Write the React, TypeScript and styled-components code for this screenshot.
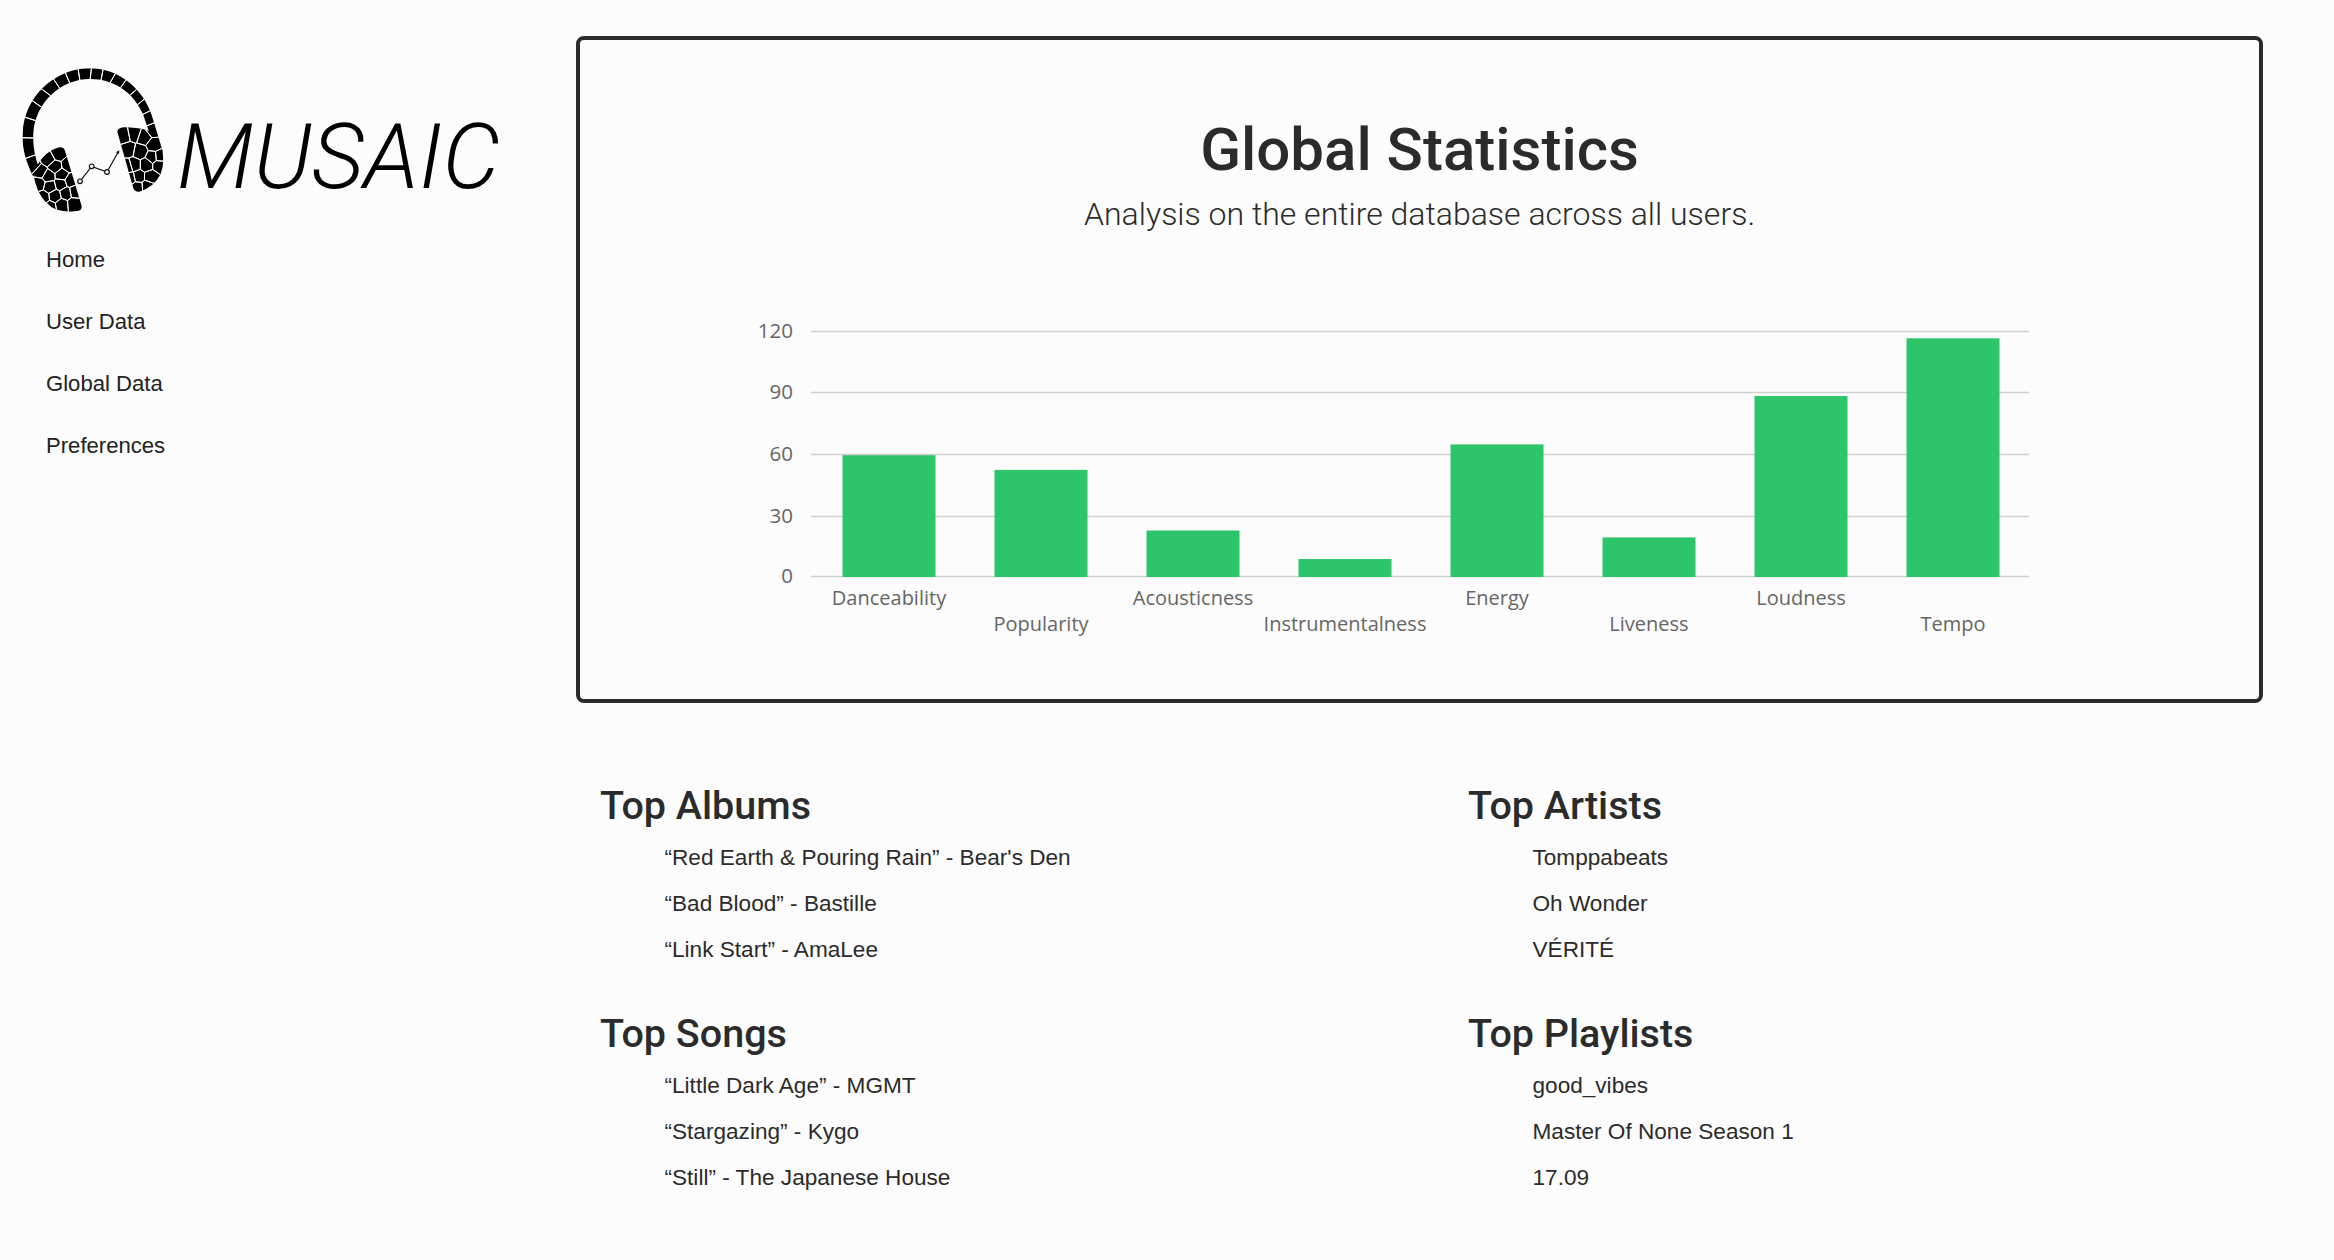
import React from 'react';
import styled, { createGlobalStyle } from 'styled-components';

interface Stat {
  name: string;
  value: number;
}

interface ListGroup {
  title: string;
  items: string[];
}

const navItems = ['Home', 'User Data', 'Global Data', 'Preferences'];

const stats: Stat[] = [
  { name: 'Danceability', value: 59.7 },
  { name: 'Popularity', value: 52.5 },
  { name: 'Acousticness', value: 22.8 },
  { name: 'Instrumentalness', value: 8.8 },
  { name: 'Energy', value: 65 },
  { name: 'Liveness', value: 19.4 },
  { name: 'Loudness', value: 88.7 },
  { name: 'Tempo', value: 117 },
];

const ticks = [
  { label: 0, y: 256.5 },
  { label: 30, y: 196.5 },
  { label: 60, y: 134.5 },
  { label: 90, y: 72.5 },
  { label: 120, y: 11.5 },
];

const groups: ListGroup[] = [
  { title: 'Top Albums', items: ['“Red Earth & Pouring Rain” - Bear\'s Den', '“Bad Blood” - Bastille', '“Link Start” - AmaLee'] },
  { title: 'Top Artists', items: ['Tomppabeats', 'Oh Wonder', 'VÉRITÉ'] },
  { title: 'Top Songs', items: ['“Little Dark Age” - MGMT', '“Stargazing” - Kygo', '“Still” - The Japanese House'] },
  { title: 'Top Playlists', items: ['good_vibes', 'Master Of None Season 1', '17.09'] },
];

// mosaic cells of the logo, placed by eye on the reference
const seeds: [number, number][] = [
  [82, 295], [84, 232], [100, 345], [100, 182], [126, 145], [152, 110], [185, 88], [218, 74], [255, 68], [290, 72],
  [322, 78], [352, 95], [382, 116], [408, 146], [430, 172], [446, 205], [460, 240],
  [175, 312], [145, 328], [165, 350], [122, 365], [145, 378], [185, 375], [205, 345], [116, 402], [150, 410], [182, 402],
  [212, 392], [130, 442], [165, 438], [198, 430], [225, 425], [150, 472], [185, 465], [222, 462],
  [372, 258], [402, 252], [432, 262], [462, 285], [385, 298], [420, 305], [458, 322], [402, 345], [440, 345],
  [476, 345], [385, 350], [415, 380], [452, 380], [412, 412], [442, 410], [392, 385], [478, 320],
];

function voronoiCracks(points: [number, number][]): string {
  return points
    .map(([x, y], i) => {
      let cell: [number, number][] = [[0, 0], [540, 0], [540, 540], [0, 540]];
      points.forEach(([ox, oy], j) => {
        if (i === j) return;
        const mx = (x + ox) / 2;
        const my = (y + oy) / 2;
        const dx = ox - x;
        const dy = oy - y;
        const side = (p: [number, number]) => (p[0] - mx) * dx + (p[1] - my) * dy;
        const next: [number, number][] = [];
        cell.forEach((p, k) => {
          const q = cell[(k + 1) % cell.length];
          const sp = side(p);
          const sq = side(q);
          if (sp <= 0) next.push(p);
          if (sp < 0 !== sq < 0) {
            const t = sp / (sp - sq);
            next.push([p[0] + (q[0] - p[0]) * t, p[1] + (q[1] - p[1]) * t]);
          }
        });
        cell = next;
      });
      return 'M' + cell.map((p) => `${p[0].toFixed(1)} ${p[1].toFixed(1)}`).join('L') + 'Z';
    })
    .join('');
}

const LOGO_SHAPE =
  'M100 380C75 330 66 290 68 250C72 140 165 55 270 55C360 55 430 120 455 195L490 310L445 240L430 195C400 125 340 87 270 87C180 87 105 160 100 250C98 285 105 320 114 345Z' +
  'M172 293Q190 288 195 302L245 468Q246 482 232 483Q190 490 155 472Q118 445 105 395Q98 370 112 345Q135 305 172 293Z' +
  'M352 245Q352 234 372 232Q410 232 440 240Q470 252 485 295Q496 335 482 372Q462 412 418 425Q404 426 400 415Z';

function Logo() {
  return (
    <LogoMark viewBox="0 0 540 534">
      <defs>
        <clipPath id="headphones">
          <path d={LOGO_SHAPE} />
        </clipPath>
      </defs>
      <g clipPath="url(#headphones)">
        <rect width="540" height="540" fill="#000" />
        <path d={voronoiCracks(seeds)} fill="none" stroke="#fff" strokeWidth="3" />
      </g>
      <path d="M240 394L275 349L321 366L355 305" fill="none" stroke="#111" strokeWidth="3.5" />
      <path d="M358 301L348 307L357 313Z" fill="#111" />
      <circle cx="240" cy="394" r="7" fill="#fcfcfc" stroke="#111" strokeWidth="3.5" />
      <circle cx="275" cy="349" r="7" fill="#fcfcfc" stroke="#111" strokeWidth="3.5" />
      <circle cx="321" cy="366" r="7" fill="#fcfcfc" stroke="#111" strokeWidth="3.5" />
    </LogoMark>
  );
}

const CHART_LEFT = 231;
const CHART_RIGHT = 1449;
const CHART_BASE = 257;
const UNIT = 2.04;
const BAR_WIDTH = 93;
const BAR_START = 262.5;
const BAR_STEP = 152;

function BarChart() {
  return (
    <ChartSvg viewBox="0 -14 1679 334">
      {ticks.map((tick) => (
        <g key={tick.label}>
          <line x1={CHART_LEFT} x2={CHART_RIGHT} y1={tick.y} y2={tick.y} stroke="#d0d0d0" strokeWidth="1.5" />
          <TickLabel x={213} y={tick.y + 6.5}>
            {tick.label}
          </TickLabel>
        </g>
      ))}
      {stats.map((stat, i) => (
        <g key={stat.name}>
          <rect
            x={BAR_START + i * BAR_STEP}
            y={CHART_BASE - stat.value * UNIT}
            width={BAR_WIDTH}
            height={stat.value * UNIT}
            fill="#2ec469"
          />
          <BarLabel x={BAR_START + BAR_WIDTH / 2 + i * BAR_STEP} y={i % 2 === 0 ? 285 : 311}>
            {stat.name}
          </BarLabel>
        </g>
      ))}
    </ChartSvg>
  );
}

export default function App() {
  return (
    <Page>
      <GlobalStyle />
      <Sidebar>
        <Brand>
          <Logo />
          <Wordmark>MUSAIC</Wordmark>
        </Brand>
        <Nav>
          {navItems.map((item) => (
            <NavItem key={item}>{item}</NavItem>
          ))}
        </Nav>
      </Sidebar>
      <Main>
        <Card>
          <Title>Global Statistics</Title>
          <Subtitle>Analysis on the entire database across all users.</Subtitle>
          <BarChart />
        </Card>
        <Lists>
          {groups.map((group) => (
            <section key={group.title}>
              <GroupTitle>{group.title}</GroupTitle>
              {group.items.map((item) => (
                <GroupItem key={item}>{item}</GroupItem>
              ))}
            </section>
          ))}
        </Lists>
      </Main>
    </Page>
  );
}

const GlobalStyle = createGlobalStyle`
  html, body {
    margin: 0;
    background: #fcfcfc;
  }
`;

const Page = styled.div`
  display: flex;
  min-height: 1260px;
  background: #fcfcfc;
  color: #2b2b2b;
  font-family: 'Liberation Sans', Arial, sans-serif;
`;

const Sidebar = styled.aside`
  width: 576px;
  flex-shrink: 0;
  padding-top: 50px;
`;

const Brand = styled.div`
  display: flex;
  align-items: flex-start;
`;

const LogoMark = styled.svg`
  width: 180px;
  height: 178px;
  flex-shrink: 0;
`;

const Wordmark = styled.div`
  margin-top: 52px;
  margin-left: -3px;
  font-family: Roboto, 'Liberation Sans', sans-serif;
  font-size: 91px;
  font-weight: 300;
  font-style: italic;
  line-height: 110px;
  white-space: nowrap;
  color: #000;
`;

const Nav = styled.nav`
  padding-top: 1px;
  padding-left: 46px;
`;

const NavItem = styled.div`
  font-size: 22.1px;
  line-height: 62px;
  color: #222;
`;

const Main = styled.main`
  width: 1687px;
  padding-top: 36px;
`;

const Card = styled.div`
  box-sizing: border-box;
  height: 667px;
  padding-top: 78px;
  border: 4px solid #2b2b2b;
  border-radius: 8px;
  text-align: center;
`;

const Title = styled.h1`
  margin: 0;
  font-family: Roboto, 'Liberation Sans', sans-serif;
  font-size: 60px;
  font-weight: 500;
  line-height: 64px;
`;

const Subtitle = styled.p`
  margin: 10px 0 0;
  font-family: Roboto, 'Liberation Sans', sans-serif;
  font-size: 32px;
  font-weight: 300;
  line-height: 45px;
`;

const ChartSvg = styled.svg`
  display: block;
  width: 1679px;
  height: 334px;
  margin-top: 69px;
`;

const TickLabel = styled.text`
  font-family: 'Open Sans', sans-serif;
  font-size: 20.5px;
  fill: #666;
  text-anchor: end;
`;

const BarLabel = styled.text`
  font-family: 'Open Sans', sans-serif;
  font-size: 20px;
  fill: #666;
  text-anchor: middle;
`;

const Lists = styled.div`
  display: grid;
  grid-template-columns: 868px 1fr;
  row-gap: 32px;
  margin-top: 74px;
  padding-left: 24px;
`;

const GroupTitle = styled.h2`
  margin: 0;
  font-family: Roboto, 'Liberation Sans', sans-serif;
  font-size: 39.5px;
  font-weight: 500;
  line-height: 58px;
`;

const GroupItem = styled.div`
  padding-left: 64.5px;
  font-size: 22.6px;
  line-height: 46px;
`;
